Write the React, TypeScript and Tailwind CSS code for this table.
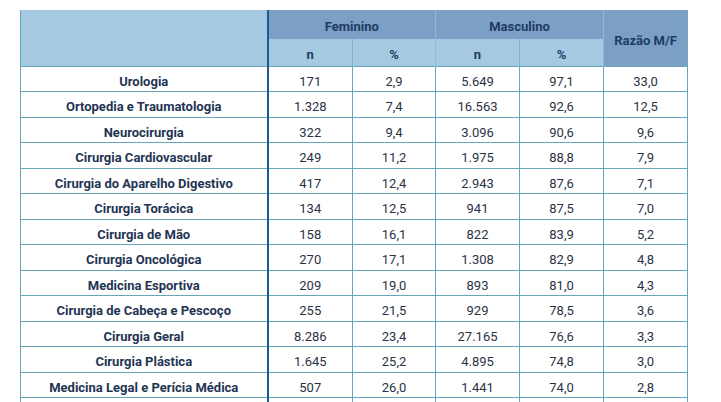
import React from "react";

type Row = [string, string, string, string, string, string];

const rows: Row[] = [
  ["Urologia", "171", "2,9", "5.649", "97,1", "33,0"],
  ["Ortopedia e Traumatologia", "1.328", "7,4", "16.563", "92,6", "12,5"],
  ["Neurocirurgia", "322", "9,4", "3.096", "90,6", "9,6"],
  ["Cirurgia Cardiovascular", "249", "11,2", "1.975", "88,8", "7,9"],
  ["Cirurgia do Aparelho Digestivo", "417", "12,4", "2.943", "87,6", "7,1"],
  ["Cirurgia Torácica", "134", "12,5", "941", "87,5", "7,0"],
  ["Cirurgia de Mão", "158", "16,1", "822", "83,9", "5,2"],
  ["Cirurgia Oncológica", "270", "17,1", "1.308", "82,9", "4,8"],
  ["Medicina Esportiva", "209", "19,0", "893", "81,0", "4,3"],
  ["Cirurgia de Cabeça e Pescoço", "255", "21,5", "929", "78,5", "3,6"],
  ["Cirurgia Geral", "8.286", "23,4", "27.165", "76,6", "3,3"],
  ["Cirurgia Plástica", "1.645", "25,2", "4.895", "74,8", "3,0"],
  ["Medicina Legal e Perícia Médica", "507", "26,0", "1.441", "74,0", "2,8"],
];

function App() {
  return (
    <div className="h-[402px] overflow-hidden bg-white pt-[10px] pl-[20px] font-['Roboto',sans-serif]">
      <table className="w-[667px] table-fixed border-collapse text-[13px] leading-[15px]">
        <colgroup>
          <col className="w-[247px]" />
          <col className="w-[85px]" />
          <col className="w-[83px]" />
          <col className="w-[84px]" />
          <col className="w-[84px]" />
          <col className="w-[84px]" />
        </colgroup>
        <thead className="font-bold text-[#1f3c64]">
          <tr className="h-[29px]">
            <th
              rowSpan={2}
              className="border-l border-[#6aa6bb] bg-[#a6c9e2]"
            ></th>
            <th
              colSpan={2}
              className="border-l-2 border-l-[#1d5a8e] bg-[#7b9fc5] pt-[3px]"
            >
              Feminino
            </th>
            <th
              colSpan={2}
              className="border-l border-l-[#95b5d5] bg-[#7b9fc5] pt-[3px]"
            >
              Masculino
            </th>
            <th
              rowSpan={2}
              className="border-l border-r border-l-[#95b5d5] border-r-[#6aa6bb] bg-[#7b9fc5] pt-[6px]"
            >
              Razão M/F
            </th>
          </tr>
          <tr className="h-[27px]">
            <th className="border-l-2 border-l-[#1d5a8e] bg-[#a6c9e2] pt-[5px]">n</th>
            <th className="border-l border-l-[#7fb0cc] bg-[#a6c9e2] pt-[5px]">%</th>
            <th className="border-l border-l-[#95b5d5] bg-[#a6c9e2] pt-[5px]">n</th>
            <th className="border-l border-l-[#7fb0cc] bg-[#a6c9e2] pt-[5px]">%</th>
          </tr>
        </thead>
        <tbody className="text-[#2b3245]">
          {rows.map((r) => (
            <tr key={r[0]} className="h-[25.5px]">
              <td className="border border-[#6aa6bb] pt-[5px] text-center font-bold text-[#1f3553]">
                {r[0]}
              </td>
              <td className="border border-[#6aa6bb] border-l-2 border-l-[#1d5a8e] pt-[5px] text-center">
                {r[1]}
              </td>
              <td className="border border-[#6aa6bb] pt-[5px] text-center">{r[2]}</td>
              <td className="border border-[#6aa6bb] pt-[5px] text-center">{r[3]}</td>
              <td className="border border-[#6aa6bb] pt-[5px] text-center">{r[4]}</td>
              <td className="border border-[#6aa6bb] pt-[5px] text-center">{r[5]}</td>
            </tr>
          ))}
          <tr className="h-[25.5px]">
            <td className="border border-[#6aa6bb]"></td>
            <td className="border border-[#6aa6bb] border-l-2 border-l-[#1d5a8e]"></td>
            <td className="border border-[#6aa6bb]"></td>
            <td className="border border-[#6aa6bb]"></td>
            <td className="border border-[#6aa6bb]"></td>
            <td className="border border-[#6aa6bb]"></td>
          </tr>
        </tbody>
      </table>
    </div>
  );
}

export default App;
